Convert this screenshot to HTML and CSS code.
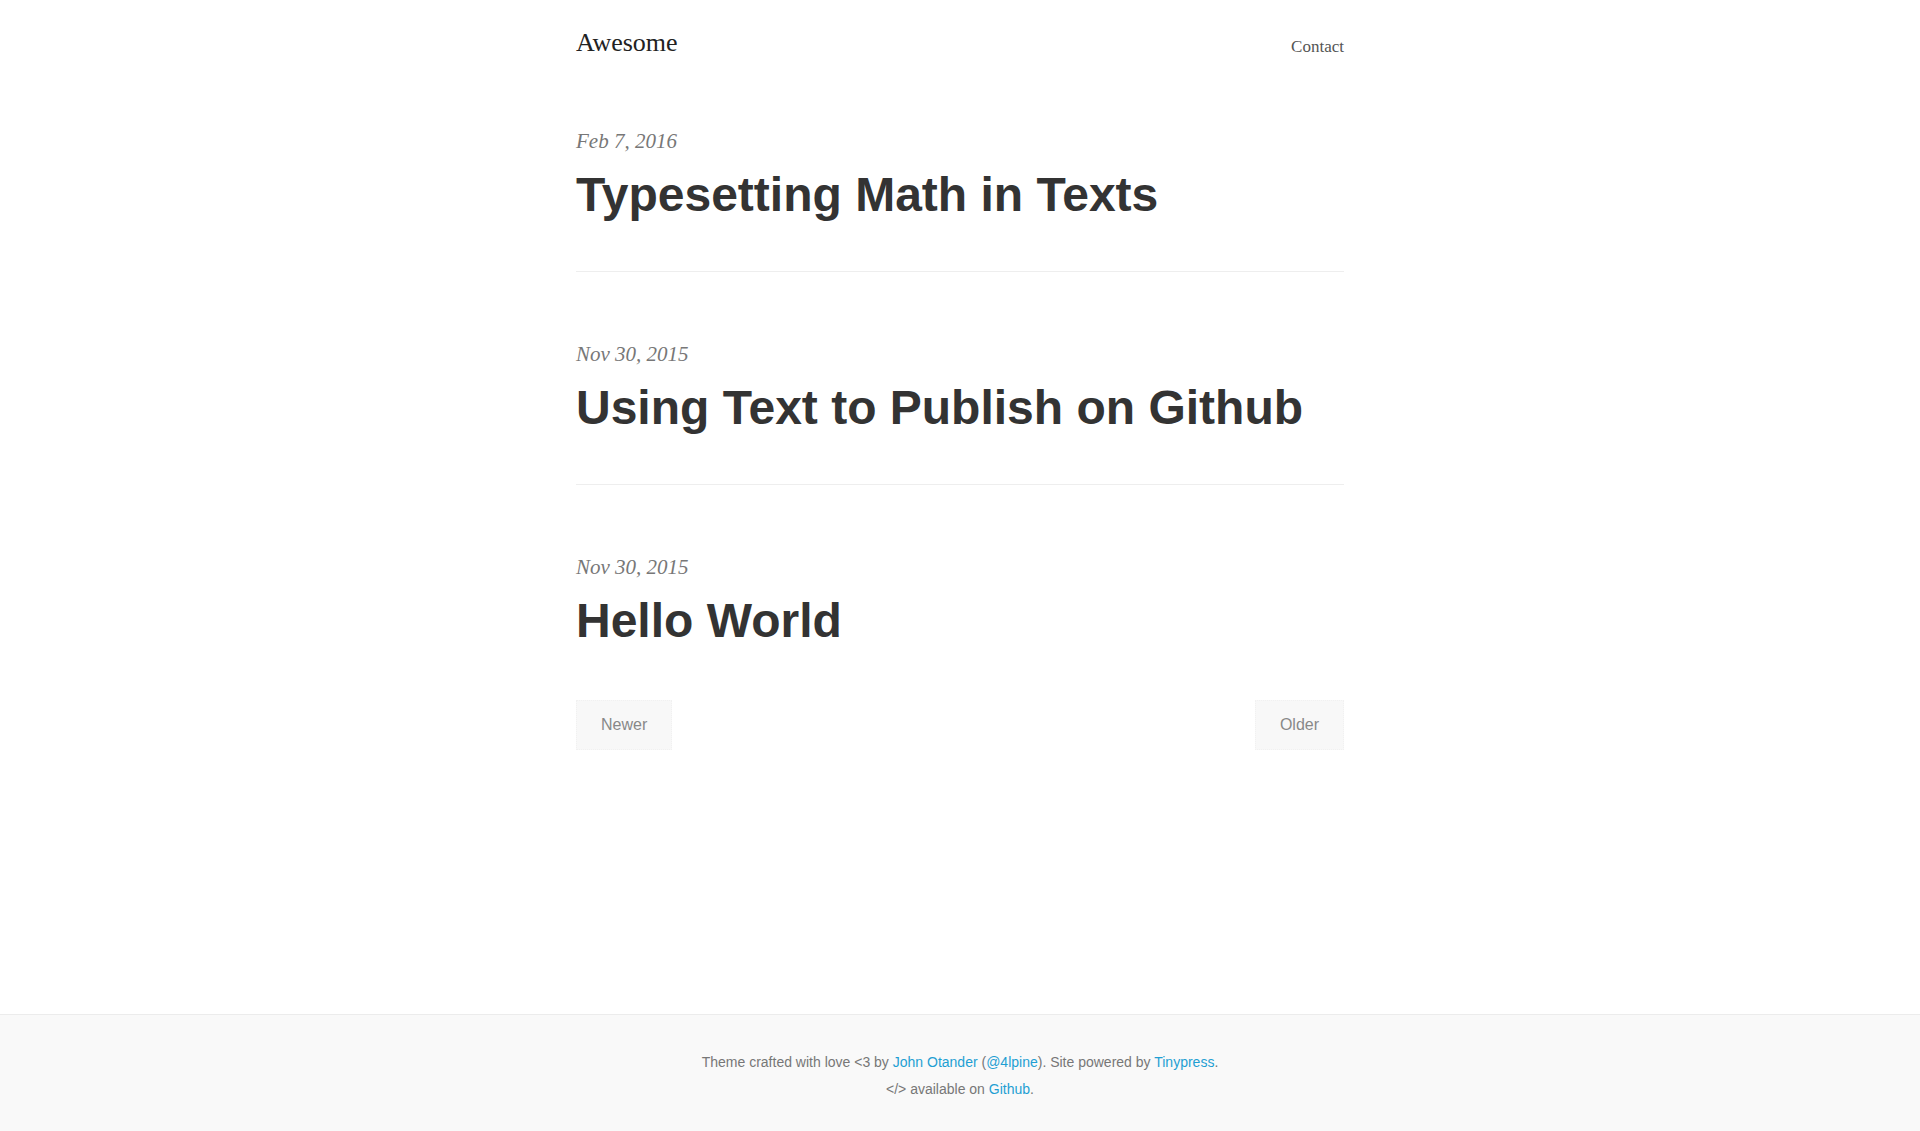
FILE: index.html
```html
<!DOCTYPE html>
<html lang="en">
<head>
<meta charset="utf-8">
<title>Awesome</title>
<link rel="stylesheet" href="styles.css">
</head>
<body>
<div class="page">
  <div class="wrap">
    <header class="site-header">
      <a class="brand" href="#">Awesome</a>
      <nav class="nav"><a href="#">Contact</a></nav>
    </header>
    <main class="posts">
      <article class="post">
        <div class="post-date">Feb 7, 2016</div>
        <h1 class="post-title"><a href="#">Typesetting Math in Texts</a></h1>
      </article>
      <article class="post">
        <div class="post-date">Nov 30, 2015</div>
        <h1 class="post-title"><a href="#">Using Text to Publish on Github</a></h1>
      </article>
      <article class="post post-last">
        <div class="post-date">Nov 30, 2015</div>
        <h1 class="post-title"><a href="#">Hello World</a></h1>
      </article>
      <div class="pager">
        <a class="btn" href="#">Newer</a>
        <a class="btn" href="#">Older</a>
      </div>
    </main>
  </div>
  <footer class="site-footer">
    <p class="footer-line">Theme crafted with love &lt;3 by <a href="#">John Otander</a> (<a href="#">@4lpine</a>). Site powered by <a href="#">Tinypress</a>.</p>
    <p class="footer-line">&lt;/&gt; available on <a href="#">Github</a>.</p>
  </footer>
</div>
</body>
</html>
```
FILE: styles.css
```css
html, body {
  margin: 0;
  padding: 0;
  background: #fff;
}
body {
  font-family: "Liberation Sans", Arial, sans-serif;
  color: #333;
}
a {
  text-decoration: none;
  color: inherit;
}
.page {
  min-height: 100vh;
  display: flex;
  flex-direction: column;
}
.wrap {
  width: 768px;
  margin: 0 auto;
}
.site-header {
  display: flex;
  justify-content: space-between;
  align-items: flex-start;
  padding-top: 25px;
}
.brand {
  font-family: "Liberation Serif", "DejaVu Serif", Georgia, serif;
  font-size: 26px;
  line-height: 36px;
  color: #222;
}
.nav {
  margin-top: 10px;
  line-height: 24px;
}
.nav a {
  font-family: "Liberation Serif", "DejaVu Serif", Georgia, serif;
  font-size: 17px;
  color: #555;
}
.posts {
  margin-top: 65px;
}
.post {
  padding-bottom: 46px;
  border-bottom: 1px solid #eee;
  margin-bottom: 67px;
}
.post-last {
  border-bottom: 0;
  margin-bottom: 0;
  padding-bottom: 49px;
}
.post-date {
  font-family: "Liberation Serif", "DejaVu Serif", Georgia, serif;
  font-style: italic;
  font-size: 21px;
  line-height: 30px;
  color: #777;
}
.post-title {
  margin: 9px 0 0;
  font-size: 48px;
  line-height: 60px;
  font-weight: 700;
  color: #333;
}
.pager {
  display: flex;
  justify-content: space-between;
}
.btn {
  display: inline-block;
  padding: 15px 24px;
  font-size: 16px;
  line-height: 18px;
  color: #888;
  background: #f8f8f8;
  border: 1px dotted #f1f1f1;
}
.site-footer {
  margin-top: auto;
  background: #f9f9f9;
  border-top: 1px solid #ececec;
  padding: 34px 0 28px;
  text-align: center;
}
.footer-line {
  margin: 0;
  font-size: 14px;
  line-height: 27px;
  color: #777;
}
.footer-line a {
  color: #1f9fd3;
}
```
